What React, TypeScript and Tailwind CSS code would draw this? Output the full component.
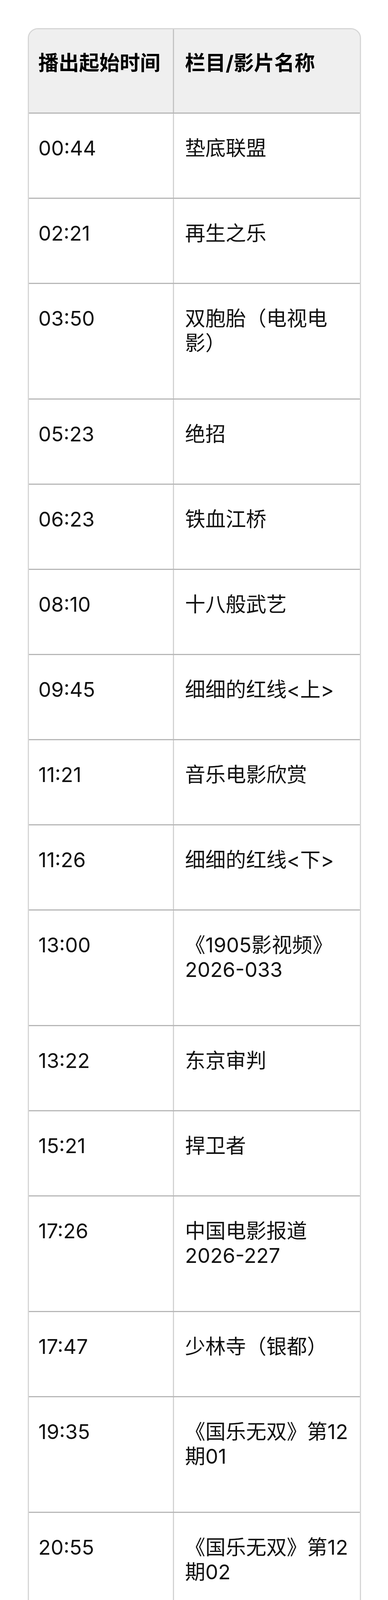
import React from "react";

type Row = { time: string; lines: string[] };

const rows: Row[] = [
  { time: "00:44", lines: ["垫底联盟"] },
  { time: "02:21", lines: ["再生之乐"] },
  { time: "03:50", lines: ["双胞胎（电视电", "影）"] },
  { time: "05:23", lines: ["绝招"] },
  { time: "06:23", lines: ["铁血江桥"] },
  { time: "08:10", lines: ["十八般武艺"] },
  { time: "09:45", lines: ["细细的红线<上>"] },
  { time: "11:21", lines: ["音乐电影欣赏"] },
  { time: "11:26", lines: ["细细的红线<下>"] },
  { time: "13:00", lines: ["《1905影视频》", "2026-033"] },
  { time: "13:22", lines: ["东京审判"] },
  { time: "15:21", lines: ["捍卫者"] },
  { time: "17:26", lines: ["中国电影报道", "2026-227"] },
  { time: "17:47", lines: ["少林寺（银都）"] },
  { time: "19:35", lines: ["《国乐无双》第12", "期01"] },
  { time: "20:55", lines: ["《国乐无双》第12", "期02"] },
  { time: "22:18", lines: ["中国福利彩票阳", "光开奖", "2026-08-15"] },
  { time: "22:20", lines: ["《国乐无双》第12", "期03"] },
  { time: "23:00", lines: ["中国体育彩票阳", "光开奖", "2026-08-15"] },
  { time: "23:10", lines: ["九龙城寨之围城", "（上）"] },
  { time: "23:44", lines: ["九龙城寨之围城", "（下）"] },
];

// row height (incl. the 3px separator) by number of text lines
const rowHeight: Record<number, string> = {
  1: "h-[218px]",
  2: "h-[296px]",
  3: "h-[373px]",
};

// smeared watermark under the table: [x, width, opacity]
const bars: [number, number, number][] = [
  [7, 5, 0.9], [18, 3, 0.45], [28, 4, 0.85], [35, 4, 0.85], [43, 3, 0.6],
  [84, 3, 0.55], [107, 6, 0.85], [117, 3, 0.4], [130, 4, 0.6], [147, 6, 0.85],
  [164, 5, 0.85], [180, 5, 0.85], [196, 5, 0.85], [210, 3, 0.4], [228, 6, 0.9],
  [244, 5, 0.85], [260, 3, 0.4], [272, 5, 0.8], [288, 3, 0.4], [300, 3, 0.4],
];

function Watermark() {
  return (
    <svg width="305" height="44" viewBox="0 0 305 44">
      <defs>
        <linearGradient id="wm" x1="0" y1="0" x2="0" y2="1">
          <stop offset="0" stopColor="#ffffff" stopOpacity="0" />
          <stop offset="0.75" stopColor="#1a1a1a" stopOpacity="1" />
          <stop offset="1" stopColor="#555555" stopOpacity="0.6" />
        </linearGradient>
      </defs>
      {bars.map(([x, w, o], i) => (
        <rect key={i} x={x - w / 2} y="2" width={w} height="38" fill="url(#wm)" opacity={o} />
      ))}
      <path d="M5 40 q2 1 4 -2 M26 40 q2 1 4 -2 M33 40 q2 1 4 -2" stroke="#111" strokeWidth="1.5" fill="none" />
      <path d="M58 20 v14 q0 6 10 6 q10 0 10 -6 v-14" stroke="#bbb" strokeWidth="1" fill="none" />
      <path d="M58 34 q0 6 10 6 q10 0 10 -6" stroke="#222" strokeWidth="1.5" fill="none" />
    </svg>
  );
}

export default function App() {
  return (
    <div className="min-h-[5868px] bg-white pt-[72px] text-[#111] font-['Inter','Noto_Sans_CJK_SC',sans-serif]">
      <div className="ml-[71px] w-[852px] overflow-hidden rounded-[26px] border-[3px] border-[#d6d6d6]">
        <div className="flex h-[213px] bg-[#efefef] text-[52px] leading-[63px] font-bold text-black">
          <div className="w-[371px] shrink-0 border-r-[3px] border-[#c4c4c4] pl-[24px] pt-[55px]">
            播出起始时间
          </div>
          <div className="flex-1 pl-[28px] pt-[55px]">栏目/影片名称</div>
        </div>
        {rows.map((r) => (
          <div
            key={r.time}
            className={`flex border-t-[3px] border-[#b7b7b7] text-[52px] leading-[63px] ${rowHeight[r.lines.length]}`}
          >
            <div className="w-[371px] shrink-0 border-r-[3px] border-[#d3d3d3] pl-[24px] pt-[57px]">
              {r.time}
            </div>
            <div className="flex-1 pl-[28px] pt-[57px]">
              {r.lines.map((l) => (
                <div key={l} className="whitespace-nowrap">
                  {l}
                </div>
              ))}
            </div>
          </div>
        ))}
      </div>
      <div className="ml-[665px] mt-[3px]">
        <Watermark />
      </div>
    </div>
  );
}
